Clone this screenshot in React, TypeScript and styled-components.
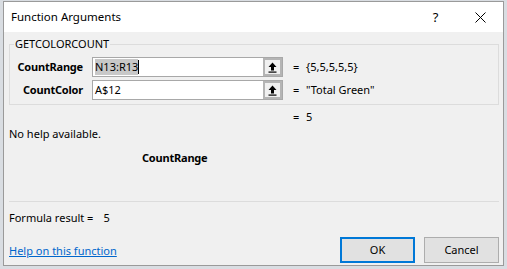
import * as React from 'react';
import styled, { createGlobalStyle } from 'styled-components';

const Global = createGlobalStyle`
  html, body {
    margin: 0;
    padding: 0;
    background: #d9dde2;
  }
  body {
    font-family: 'Noto Sans', 'Open Sans', sans-serif;
    font-size: 11px;
    line-height: 16px;
    color: #000;
  }
`;

const Screen = styled.div`
  width: 507px;
  height: 269px;
  padding: 1px 3px 3px 3px;
  box-sizing: border-box;
`;

const Dialog = styled.div`
  height: 100%;
  display: flex;
  flex-direction: column;
  border: 1px solid #9a9a9a;
  box-sizing: border-box;
  background: #f0f0f0;
`;

const TitleBar = styled.div`
  height: 30px;
  flex: none;
  display: flex;
  align-items: center;
  background: #fff;
  padding-left: 7px;
  font-size: 11.5px;
`;

const Title = styled.div`
  flex: 1;
`;

const TitleButton = styled.div`
  width: 45px;
  display: flex;
  justify-content: center;
  align-items: center;
  font-size: 13px;
`;

const Body = styled.div`
  flex: 1;
  display: flex;
  flex-direction: column;
  padding: 4px 4px 2px 5px;
`;

const Group = styled.fieldset`
  margin: 0;
  padding: 5px 0 4px 0;
  border: 1px solid #dcdcdc;
  display: flex;
  flex-direction: column;
  gap: 3px;
`;

const Legend = styled.legend`
  padding: 0 1px;
  margin-left: 4px;
`;

const ArgRow = styled.div`
  display: flex;
  align-items: center;
  height: 20px;
`;

const ArgLabel = styled.div`
  width: 73px;
  text-align: right;
  font-weight: bold;
  letter-spacing: -0.2px;
  padding-right: 9px;
`;

const InputBox = styled.div`
  width: 191px;
  height: 20px;
  box-sizing: border-box;
  border: 1px solid #a8a8a8;
  background: #fff;
  display: flex;
  align-items: center;
`;

const InputText = styled.div`
  flex: 1;
  padding-left: 2px;
  display: flex;
  align-items: center;
`;

const Selected = styled.span`
  background: #c8c8c8;
  line-height: 16px;
`;

const Caret = styled.span`
  display: inline-block;
  width: 1px;
  height: 14px;
  background: #000;
`;

const RefButton = styled.div`
  width: 19px;
  height: 18px;
  box-sizing: border-box;
  border: 2px solid #b4b4b4;
  background: #f0f0f0;
  display: flex;
  align-items: center;
  justify-content: center;
`;

const Eq = styled.div`
  width: 13px;
  padding-left: 10px;
`;

const Value = styled.div``;

const ResultRow = styled.div`
  display: flex;
  padding-left: 274px;
  margin-top: 4px;
  height: 15px;
  align-items: center;
`;

const HelpText = styled.div`
  margin-top: 2px;
  height: 16px;
`;

const ArgName = styled.div`
  margin-top: 8px;
  padding-left: 133px;
  font-weight: bold;
  letter-spacing: -0.2px;
`;

const Separator = styled.div`
  margin-top: 35px;
  border-top: 1px solid #dcdcdc;
`;

const FormulaRow = styled.div`
  margin-top: 8px;
  display: flex;
  gap: 10px;
`;

const Footer = styled.div`
  margin-top: auto;
  display: flex;
  align-items: center;
`;

const HelpLink = styled.a`
  flex: 1;
  color: #0066cc;
  text-decoration: underline;
  padding-top: 1px;
`;

const Button = styled.div<{ $primary?: boolean }>`
  width: 75px;
  height: 26px;
  box-sizing: border-box;
  margin-left: 9px;
  display: flex;
  align-items: center;
  justify-content: center;
  background: #e1e1e1;
  border: ${p => (p.$primary ? '2px solid #0078d7' : '1px solid #adadad')};
`;

const UpArrow = () => (
  <svg width="9" height="11" viewBox="0 0 9 11">
    <path d="M4.5 0.5 L8.5 5 L6 5 L6 8.5 L3 8.5 L3 5 L0.5 5 Z" fill="#000" />
    <rect x="0.5" y="9.5" width="8" height="1.2" fill="#000" />
  </svg>
);

const CloseIcon = () => (
  <svg width="11" height="11" viewBox="0 0 11 11">
    <path d="M0.5 0.5 L10.5 10.5 M10.5 0.5 L0.5 10.5" stroke="#000" strokeWidth="1" />
  </svg>
);

type Arg = { name: string; input: string; value: string; active?: boolean };

const args: Arg[] = [
  { name: 'CountRange', input: 'N13:R13', value: '{5,5,5,5,5}', active: true },
  { name: 'CountColor', input: 'A$12', value: '"Total Green"' },
];

export default function App() {
  return (
    <Screen>
      <Global />
      <Dialog>
        <TitleBar>
          <Title>Function Arguments</Title>
          <TitleButton>?</TitleButton>
          <TitleButton>
            <CloseIcon />
          </TitleButton>
        </TitleBar>
        <Body>
          <Group>
            <Legend>GETCOLORCOUNT</Legend>
            {args.map(a => (
              <ArgRow key={a.name}>
                <ArgLabel>{a.name}</ArgLabel>
                <InputBox>
                  <InputText>
                    {a.active ? (
                      <>
                        <Selected>{a.input}</Selected>
                        <Caret />
                      </>
                    ) : (
                      a.input
                    )}
                  </InputText>
                  <RefButton>
                    <UpArrow />
                  </RefButton>
                </InputBox>
                <Eq>=</Eq>
                <Value>{a.value}</Value>
              </ArgRow>
            ))}
          </Group>
          <ResultRow>
            <Eq>=</Eq>
            <Value>5</Value>
          </ResultRow>
          <HelpText>No help available.</HelpText>
          <ArgName>CountRange</ArgName>
          <Separator />
          <FormulaRow>
            <span>Formula result =</span>
            <span>5</span>
          </FormulaRow>
          <Footer>
            <HelpLink href="#">Help on this function</HelpLink>
            <Button $primary>OK</Button>
            <Button>Cancel</Button>
          </Footer>
        </Body>
      </Dialog>
    </Screen>
  );
}
